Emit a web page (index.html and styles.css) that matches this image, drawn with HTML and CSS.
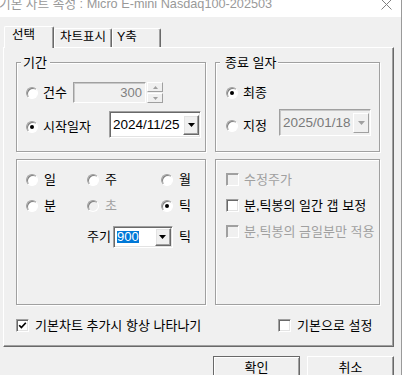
FILE: index.html
```html
<!DOCTYPE html>
<html lang="ko">
<head>
<meta charset="utf-8">
<title>기본 차트 속성</title>
<link rel="stylesheet" href="styles.css">
</head>
<body>
<div class="window">
  <div class="titlebar">
    <span class="title">기본 차트 속성 : Micro E-mini Nasdaq100-202503</span>
    <svg class="close" width="11" height="11" viewBox="0 0 11 11"><path d="M0.5 0.5 L10.5 10.5 M10.5 0.5 L0.5 10.5" stroke="#808080" stroke-width="1" fill="none"/></svg>
  </div>
  <div class="tabs">
    <div class="tab tab-active">선택</div>
    <div class="tab tab-chart">차트표시</div>
    <div class="tab tab-y">Y축</div>
  </div>
  <div class="panel">
    <div class="group-row row-top">
      <div class="group period">
        <span class="legend legend-period">기간</span>
        <div class="line line-a">
          <span class="opt"><span class="radio"></span><span class="lbl w-count">건수</span></span>
          <div class="edit">300</div>
          <div class="spin">
            <span class="spin-btn"><svg width="5" height="3" viewBox="0 0 5 3"><polygon points="0,3 5,3 2.5,0" fill="#a0a0a0"/></svg></span>
            <span class="spin-btn"><svg width="5" height="3" viewBox="0 0 5 3"><polygon points="0,0 5,0 2.5,3" fill="#a0a0a0"/></svg></span>
          </div>
        </div>
        <div class="line line-b">
          <span class="opt low"><span class="radio on"></span><span class="lbl w-start">시작일자</span></span>
          <div class="date"><span>2024/11/25</span><span class="dd"><svg width="7" height="4" viewBox="0 0 7 4"><polygon points="0,0 7,0 3.5,4" fill="#000"/></svg></span></div>
        </div>
      </div>
      <div class="group enddate">
        <span class="legend legend-end">종료 일자</span>
        <div class="line line-a">
          <span class="opt"><span class="radio on"></span><span class="lbl">최종</span></span>
        </div>
        <div class="line line-b">
          <span class="opt lower"><span class="radio"></span><span class="lbl w-fixed">지정</span></span>
          <div class="date date-off"><span>2025/01/18</span><span class="dd dd-off"><svg width="7" height="4" viewBox="0 0 7 4"><polygon points="0,0 7,0 3.5,4" fill="#a0a0a0"/></svg></span></div>
        </div>
      </div>
    </div>
    <div class="group-row row-bottom">
      <div class="group unit">
        <div class="unit-grid">
          <span class="opt"><span class="radio"></span><span class="lbl">일</span></span>
          <span class="opt"><span class="radio"></span><span class="lbl">주</span></span>
          <span class="opt"><span class="radio"></span><span class="lbl">월</span></span>
          <span class="opt"><span class="radio"></span><span class="lbl">분</span></span>
          <span class="opt"><span class="radio dis"></span><span class="lbl dis-text">초</span></span>
          <span class="opt"><span class="radio on"></span><span class="lbl">틱</span></span>
        </div>
        <div class="cycle">
          <span class="lbl">주기</span>
          <div class="combo"><span class="sel">900</span><span class="dd dd-small"><svg width="7" height="4" viewBox="0 0 7 4"><polygon points="0,0 7,0 3.5,4" fill="#000"/></svg></span></div>
          <span class="lbl tick">틱</span>
        </div>
      </div>
      <div class="group options">
        <div class="chk-row"><span class="check dis"></span><span class="lbl dis-text">수정주가</span></div>
        <div class="chk-row"><span class="check"></span><span class="lbl">분,틱봉의 일간 갭 보정</span></div>
        <div class="chk-row"><span class="check dis"></span><span class="lbl dis-text">분,틱봉의 금일분만 적용</span></div>
      </div>
    </div>
    <div class="footer">
      <div class="chk-row wide"><span class="check"><svg width="9" height="9" viewBox="0 0 9 9"><path d="M1.2 4.2 L3.4 6.6 L7.8 1.8" stroke="#000" stroke-width="1.7" fill="none"/></svg></span><span class="lbl">기본차트 추가시 항상 나타나기</span></div>
      <div class="chk-row wide"><span class="check"></span><span class="lbl">기본으로 설정</span></div>
    </div>
  </div>
  <div class="buttons">
    <div class="btn btn-default">확인</div>
    <div class="btn">취소</div>
  </div>
</div>
</body>
</html>
```
FILE: styles.css
```css
* { box-sizing: border-box; }
html, body { margin: 0; padding: 0; }
body {
  background: #f0f0f0;
  font-family: "Liberation Sans", "Noto Sans CJK KR", sans-serif;
  font-size: 13px;
  line-height: 14px;
  color: #000;
}
.window {
  width: 402px;
  height: 375px;
  border-right: 1px solid #9a9a9a;
  overflow: hidden;
}
.titlebar {
  height: 17px;
  background: #fff;
  display: flex;
  justify-content: space-between;
  align-items: flex-start;
  overflow: hidden;
}
.title {
  margin: -3px 0 0 -1px;
  color: #999;
  white-space: nowrap;
  font-size: 12.7px;
  line-height: 14px;
}
.close { margin: -1px 9px 0 0; flex: none; }

.tabs {
  display: flex;
  align-items: flex-end;
  height: 21px;
  margin-top: 9px;
  padding-left: 4px;
  position: relative;
  z-index: 1;
}
.tab {
  height: 19px;
  border-top: 1px solid #fff;
  border-left: 1px solid #fff;
  border-right: 1px solid #696969;
  box-shadow: inset -1px 0 0 #a0a0a0;
  border-radius: 2px 2px 0 0;
  padding-top: 1px;
  background: #f0f0f0;
  white-space: nowrap;
  font-size: 12.5px;
}
.tab-active { width: 50px; height: 22px; margin-bottom: -1px; padding-left: 7px; }
.tab-chart { width: 58px; padding-left: 5px; }
.tab-y { width: 49px; padding-left: 4px; }

.panel {
  margin-left: 3px;
  width: 391px;
  height: 300px;
  border: 1px solid;
  border-color: #fff #696969 #696969 #fff;
  box-shadow: inset -1px -1px 0 #a0a0a0;
  padding: 14px 13px 0 12px;
}
.group-row {
  display: grid;
  grid-template-columns: 190px 165px;
  column-gap: 9px;
}
.row-top { height: 90px; }
.row-bottom { height: 146px; margin-top: 7px; }
.group {
  position: relative;
  border: 1px solid #a0a0a0;
  box-shadow: inset 1px 1px 0 #fff, 1px 1px 0 #fff;
}
.legend {
  position: absolute;
  top: -7px;
  line-height: 14px;
  background: #f0f0f0;
  white-space: nowrap;
}
.legend-period { left: 4px; padding: 0 3px 0 2px; }
.legend-end { left: 4px; padding: 0 2px 0 5px; }

.period { padding: 19px 0 0 9px; }
.enddate { padding: 19px 0 0 10px; }
.line { display: flex; align-items: center; }
.line-a { height: 21px; }
.period .line-b { margin-top: 8px; height: 27px; }
.enddate .line-b { margin-top: 6px; height: 27px; }

.opt { display: flex; align-items: center; }
.opt .lbl { margin-left: 5px; }
.low { margin-top: 5px; }
.lower { margin-top: 6px; }
.lbl { white-space: nowrap; line-height: 14px; }
.w-count { width: 30px; }
.w-start { width: 66px; }
.w-fixed { width: 36px; }
.dis-text { color: #a0a0a0; }

.radio {
  width: 12px;
  height: 12px;
  border-radius: 50%;
  background: #fff;
  border: 1px solid;
  border-color: #a0a0a0 #fff #fff #a0a0a0;
  box-shadow: inset 1px 1px 0 #808080;
  flex: none;
  display: flex;
  align-items: center;
  justify-content: center;
}
.radio.on::after {
  content: "";
  width: 4px;
  height: 4px;
  border-radius: 50%;
  background: #000;
}
.radio.dis { background: #f0f0f0; }

.edit {
  width: 73px;
  height: 21px;
  border: 1px solid;
  border-color: #a0a0a0 #fff #fff #a0a0a0;
  box-shadow: inset 1px 1px 0 #c8c8c8;
  background: #f0f0f0;
  display: flex;
  align-items: center;
  justify-content: flex-end;
  padding-right: 3px;
  font-size: 13px;
  color: #808080;
}
.spin {
  display: flex;
  flex-direction: column;
  gap: 1px;
  margin-left: 1px;
}
.spin-btn {
  width: 16px;
  height: 10px;
  border: 1px solid;
  border-color: #fff #a0a0a0 #a0a0a0 #fff;
  display: flex;
  align-items: center;
  justify-content: center;
}

.date, .combo {
  border: 1px solid;
  border-color: #a0a0a0 #fff #fff #a0a0a0;
  box-shadow: inset 1px 1px 0 #696969, inset -1px -1px 0 #e3e3e3;
  background: #fff;
  display: flex;
  align-items: center;
  justify-content: space-between;
  padding: 0 1px 0 3px;
}
.date { width: 92px; height: 27px; font-size: 13.5px; }
.date-off {
  background: #f0f0f0;
  color: #7a7a7a;
  box-shadow: inset 1px 1px 0 #c8c8c8;
}
.dd {
  width: 16px;
  height: 20px;
  border: 1px solid;
  border-color: #fff #696969 #696969 #fff;
  box-shadow: inset -1px -1px 0 #a0a0a0, inset 1px 1px 0 #e3e3e3;
  background: #f0f0f0;
  display: flex;
  align-items: center;
  justify-content: center;
  flex: none;
}
.dd-off {
  border-color: #fff #a0a0a0 #a0a0a0 #fff;
  box-shadow: none;
}
.dd-small { height: 18px; }

.unit { padding: 12px 0 0 9px; }
.unit-grid {
  display: grid;
  grid-template-columns: 61px 74px auto;
  grid-auto-rows: 16px;
  row-gap: 10px;
}
.unit-grid .opt .lbl { margin-left: 6px; }
.cycle {
  display: flex;
  align-items: center;
  height: 22px;
  margin: 12px 0 0 61px;
}
.combo { width: 60px; height: 22px; margin-left: 2px; }
.sel {
  background: #0078d7;
  color: #fff;
  font-size: 13px;
  line-height: 12px;
  height: 12px;
}
.tick { margin-left: 6px; }

.options {
  padding: 13px 0 0 10px;
  display: flex;
  flex-direction: column;
  gap: 13px;
}
.chk-row { display: flex; align-items: center; height: 13px; }
.chk-row .lbl { margin-left: 5px; }
.chk-row.wide .lbl { margin-left: 6px; }
.check {
  width: 13px;
  height: 13px;
  background: #fff;
  border: 1px solid;
  border-color: #a0a0a0 #fff #fff #a0a0a0;
  box-shadow: inset 1px 1px 0 #696969, inset -1px -1px 0 #e3e3e3;
  flex: none;
  display: flex;
  align-items: center;
  justify-content: center;
}
.check.dis { background: #f0f0f0; box-shadow: inset 1px 1px 0 #a0a0a0; }

.footer {
  display: grid;
  grid-template-columns: 262px auto;
  margin-top: 14px;
}

.buttons {
  display: flex;
  justify-content: flex-end;
  gap: 7px;
  margin-top: 9px;
  padding-right: 7px;
}
.btn {
  width: 87px;
  height: 23px;
  display: flex;
  align-items: center;
  justify-content: center;
  border: 1px solid;
  border-color: #fff #696969 #696969 #fff;
  box-shadow: inset -1px -1px 0 #a0a0a0;
  background: #f0f0f0;
}
.btn-default {
  border-color: #696969;
  box-shadow: inset 1px 1px 0 #fff, inset -1px -1px 0 #a0a0a0;
}
```
